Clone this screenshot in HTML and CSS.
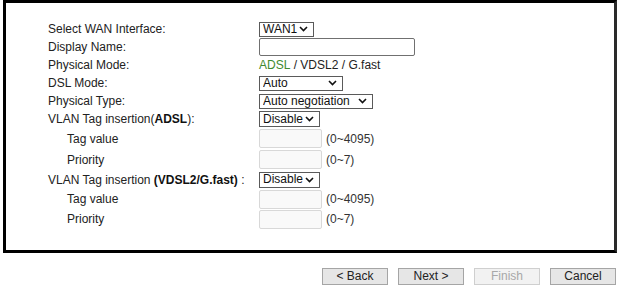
FILE: index.html
```html
<!DOCTYPE html>
<html>
<head>
<meta charset="utf-8">
<link rel="stylesheet" href="styles.css">
</head>
<body>
<div class="panel">
  <div class="row h18">
    <div class="label">Select WAN Interface:</div>
    <div class="ctrl"><select class="sel w55"><option>WAN1</option></select></div>
  </div>
  <div class="row h18">
    <div class="label">Display Name:</div>
    <div class="ctrl"><input class="txt" type="text"></div>
  </div>
  <div class="row h18">
    <div class="label">Physical Mode:</div>
    <div class="ctrl"><span class="green">ADSL</span>&nbsp;/ VDSL2 / G.fast</div>
  </div>
  <div class="row h18">
    <div class="label">DSL Mode:</div>
    <div class="ctrl"><select class="sel w84"><option>Auto</option></select></div>
  </div>
  <div class="row h18">
    <div class="label">Physical Type:</div>
    <div class="ctrl"><select class="sel w114"><option>Auto negotiation</option></select></div>
  </div>
  <div class="row h18">
    <div class="label">VLAN Tag insertion(<b>ADSL</b>):</div>
    <div class="ctrl"><select class="sel w61"><option>Disable</option></select></div>
  </div>
  <div class="row h21">
    <div class="label sub">Tag value</div>
    <div class="ctrl"><input class="dis" type="text" disabled><span class="range">(0~4095)</span></div>
  </div>
  <div class="row h21">
    <div class="label sub">Priority</div>
    <div class="ctrl"><input class="dis" type="text" disabled><span class="range">(0~7)</span></div>
  </div>
  <div class="row h19">
    <div class="label">VLAN Tag insertion <b>(VDSL2/G.fast)</b> :</div>
    <div class="ctrl"><select class="sel w61"><option>Disable</option></select></div>
  </div>
  <div class="row h20">
    <div class="label sub">Tag value</div>
    <div class="ctrl"><input class="dis" type="text" disabled><span class="range">(0~4095)</span></div>
  </div>
  <div class="row h20">
    <div class="label sub">Priority</div>
    <div class="ctrl"><input class="dis" type="text" disabled><span class="range">(0~7)</span></div>
  </div>
</div>
<div class="buttons">
  <button class="btn">&lt; Back</button>
  <button class="btn">Next &gt;</button>
  <button class="btn" disabled>Finish</button>
  <button class="btn">Cancel</button>
</div>
</body>
</html>
```

FILE: styles.css
```css
html, body {
  margin: 0;
  padding: 0;
  background: #ffffff;
}
body {
  font-family: "Liberation Sans", Arial, sans-serif;
  font-size: 12px;
  color: #222222;
}
.panel {
  box-sizing: border-box;
  margin-left: 3px;
  width: 614px;
  height: 253px;
  border: 3px solid #000000;
  border-right-color: #2a2a2a;
  padding: 17px 0 0 42px;
}
.row {
  display: grid;
  grid-template-columns: 211px auto;
  align-items: center;
}
.h18 { height: 18px; }
.h19 { height: 19px; }
.h20 { height: 20px; }
.h21 { height: 21px; }
.label {
  white-space: nowrap;
}
.label b {
  font-weight: bold;
  color: #111;
}
.label.sub {
  padding-left: 19px;
}
.ctrl {
  display: flex;
  align-items: center;
  white-space: nowrap;
}
.green {
  color: #3f8a2f;
}
.sel {
  -webkit-appearance: none;
  appearance: none;
  box-sizing: border-box;
  height: 15px;
  margin: 0;
  padding: 0 0 0 3px;
  border: 1px solid #5a5a5a;
  border-radius: 0;
  background-color: #fff;
  background-image: url("data:image/svg+xml;utf8,<svg xmlns='http://www.w3.org/2000/svg' width='9' height='6' viewBox='0 0 9 6'><path d='M1 1 L4.5 4.5 L8 1' fill='none' stroke='%23111' stroke-width='1.6'/></svg>");
  background-repeat: no-repeat;
  background-position: right 5px center;
  font-family: "Liberation Sans", Arial, sans-serif;
  font-size: 12px;
  line-height: 13px;
  color: #111;
  outline: none;
}
.w55 { width: 55px; }
.w61 { width: 61px; height: 16px; }
.w84 { width: 84px; }
.w114 { width: 114px; }
.txt {
  box-sizing: border-box;
  width: 156px;
  height: 18px;
  margin: 0;
  padding: 0 2px;
  border: 1px solid #707070;
  border-radius: 2px;
  background: #fff;
}
.dis {
  box-sizing: border-box;
  width: 63px;
  height: 19px;
  margin: 0;
  padding: 0;
  border: 1px solid #d8d8d8;
  border-radius: 2px;
  background: #f9f9f9;
}
.range {
  margin-left: 4px;
  color: #333;
}
.buttons {
  box-sizing: border-box;
  width: 617px;
  margin-top: 15px;
  display: flex;
  justify-content: flex-end;
  gap: 10px;
  padding-right: 1px;
}
.btn {
  box-sizing: border-box;
  width: 66px;
  height: 17px;
  margin: 0;
  padding: 0;
  border: 1px solid #a5a5a5;
  border-radius: 0;
  background: #e6e6e6;
  font-family: "Liberation Sans", Arial, sans-serif;
  font-size: 12px;
  line-height: 15px;
  color: #222;
}
.btn:disabled {
  border-color: #cfcfcf;
  background: #f2f2f2;
  color: #a8a8a8;
}
```
